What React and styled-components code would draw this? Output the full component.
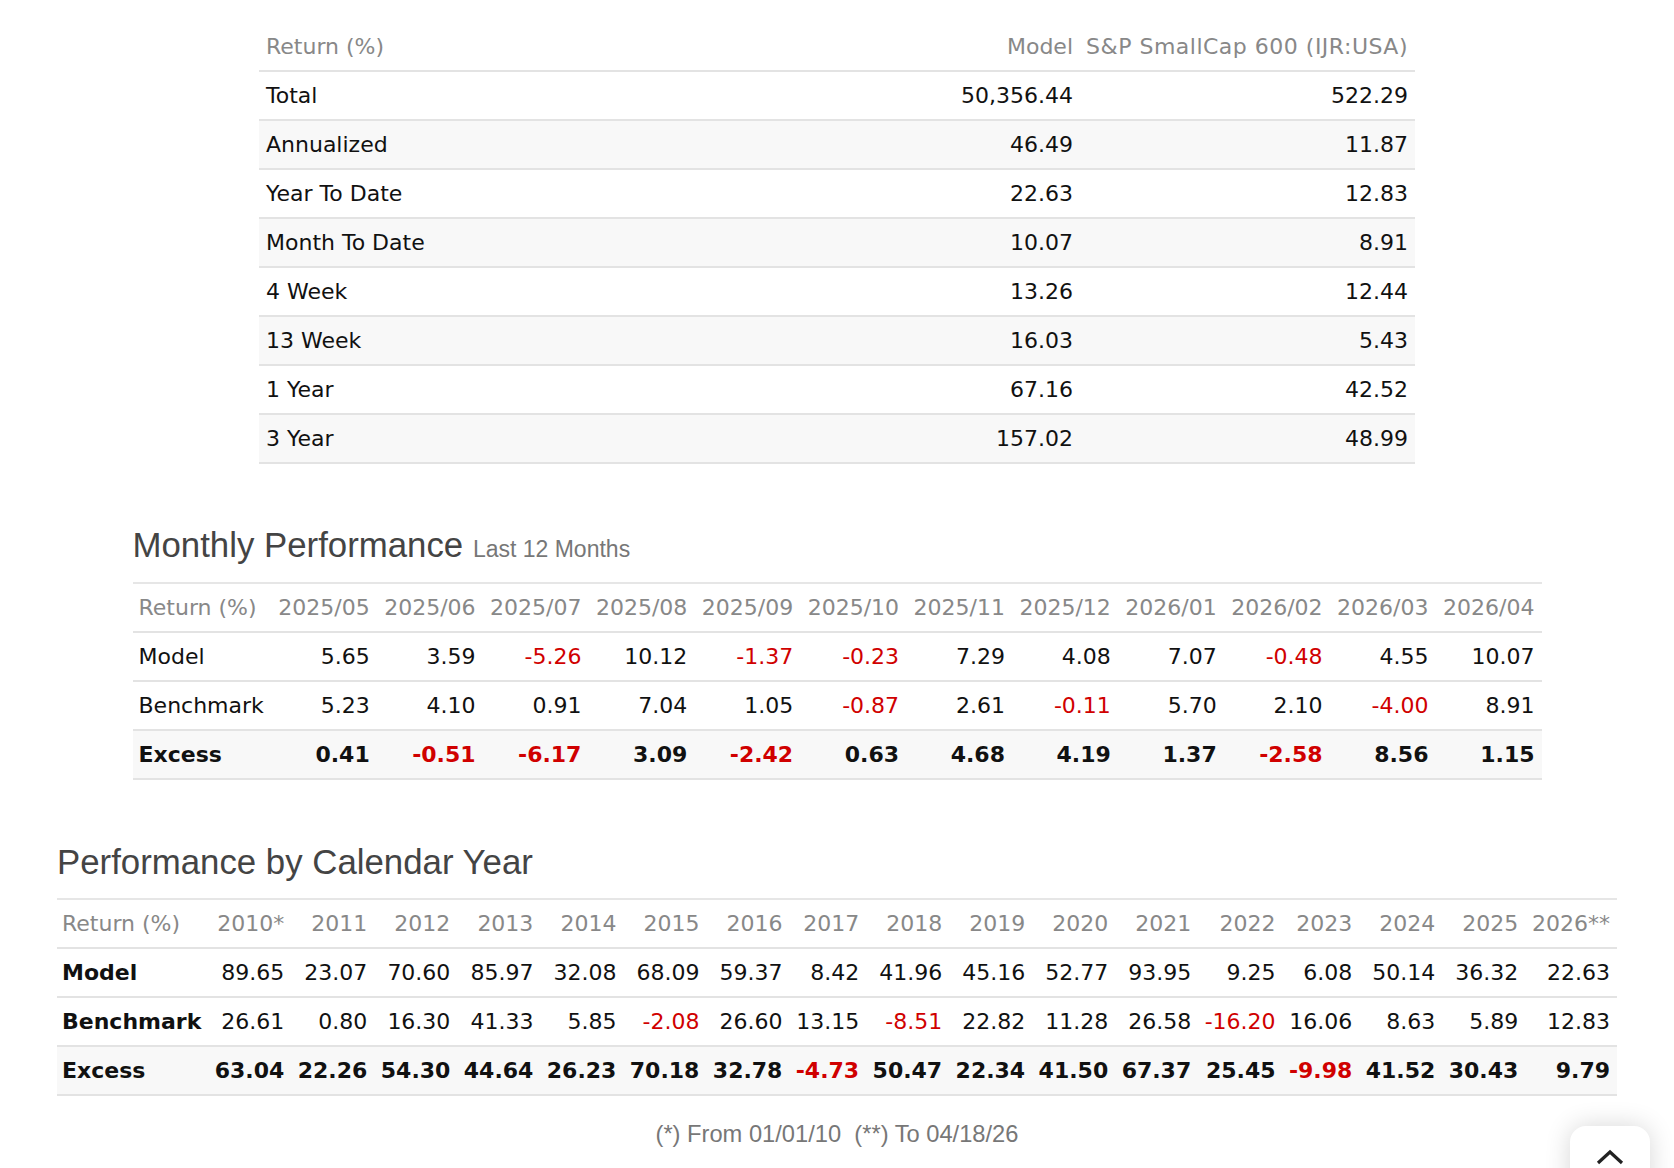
import React from "react";
import styled, { createGlobalStyle } from "styled-components";

const GlobalStyle = createGlobalStyle`
  * { box-sizing: border-box; }
  body {
    margin: 0;
    background: #fff;
    font-family: "DejaVu Sans", Verdana, sans-serif;
    color: #111;
  }
`;

const Page = styled.div`
  display: flex;
  flex-direction: column;
  align-items: center;
  padding: 23px 0 40px;
`;

const Section = styled.section`
  width: ${(p) => p.$width}px;
  margin-top: ${(p) => p.$top}px;
`;

const Heading = styled.h2`
  margin: 0 0 ${(p) => p.$gap || 16}px;
  font-family: "Liberation Sans", Helvetica, Arial, sans-serif;
  font-weight: 400;
  font-size: 34.8px;
  line-height: 40px;
  color: #444;
`;

const SubTitle = styled.span`
  font-size: 23px;
  line-height: 1;
  color: #777;
`;

const Table = styled.table`
  width: ${(p) => (p.$width ? `${p.$width}px` : "100%")};
  border-collapse: separate;
  border-spacing: 0;
  border-top: ${(p) => (p.$ruled ? "2px solid #e6e6e6" : "none")};
  font-size: 22px;
  line-height: 25px;
`;

const HeadCell = styled.th`
  padding: 11px 6px;
  width: ${(p) => (p.$w ? `${p.$w}px` : "auto")};
  text-align: ${(p) => p.$align || "right"};
  font-weight: 400;
  letter-spacing: ${(p) => p.$spacing || 0}px;
  color: #888;
  white-space: nowrap;
  border-bottom: 2px solid #e3e3e3;

  &:first-child { padding-left: ${(p) => p.$inset || 7}px; }
  &:last-child { padding-right: 7px; }
`;

const Row = styled.tr`
  background: ${(p) => (p.$shade ? "#f8f8f8" : "#fff")};
`;

const Cell = styled.td`
  padding: 11px 6px;
  text-align: ${(p) => p.$align || "right"};
  font-weight: ${(p) => (p.$bold ? 700 : 400)};
  color: ${(p) => (p.$neg ? "#d00000" : "#111")};
  white-space: nowrap;
  border-bottom: 2px solid #e3e3e3;

  &:first-child { padding-left: ${(p) => p.$inset || 7}px; }
  &:last-child { padding-right: 7px; }
`;

const Footnote = styled.p`
  margin: 25px 0 0;
  font-family: "Liberation Sans", Helvetica, Arial, sans-serif;
  font-size: 23.7px;
  line-height: 26px;
  color: #777;
  white-space: pre;
`;

const TopButton = styled.button`
  position: fixed;
  right: 24px;
  bottom: -40px;
  width: 80px;
  height: 82px;
  display: flex;
  justify-content: center;
  align-items: flex-start;
  padding-top: 22px;
  border: none;
  border-radius: 16px;
  background: #fff;
  box-shadow: 0 0 26px rgba(0, 0, 0, 0.16);
  cursor: pointer;
`;

const summary = [
  ["Total", "50,356.44", "522.29"],
  ["Annualized", "46.49", "11.87"],
  ["Year To Date", "22.63", "12.83"],
  ["Month To Date", "10.07", "8.91"],
  ["4 Week", "13.26", "12.44"],
  ["13 Week", "16.03", "5.43"],
  ["1 Year", "67.16", "42.52"],
  ["3 Year", "157.02", "48.99"],
];

const months = [
  "2025/05", "2025/06", "2025/07", "2025/08", "2025/09", "2025/10",
  "2025/11", "2025/12", "2026/01", "2026/02", "2026/03", "2026/04",
];

const monthly = [
  { label: "Model", values: ["5.65", "3.59", "-5.26", "10.12", "-1.37", "-0.23", "7.29", "4.08", "7.07", "-0.48", "4.55", "10.07"] },
  { label: "Benchmark", values: ["5.23", "4.10", "0.91", "7.04", "1.05", "-0.87", "2.61", "-0.11", "5.70", "2.10", "-4.00", "8.91"] },
  { label: "Excess", bold: true, values: ["0.41", "-0.51", "-6.17", "3.09", "-2.42", "0.63", "4.68", "4.19", "1.37", "-2.58", "8.56", "1.15"] },
];

const years = [
  "2010*", "2011", "2012", "2013", "2014", "2015", "2016", "2017", "2018",
  "2019", "2020", "2021", "2022", "2023", "2024", "2025", "2026**",
];

const yearly = [
  { label: "Model", values: ["89.65", "23.07", "70.60", "85.97", "32.08", "68.09", "59.37", "8.42", "41.96", "45.16", "52.77", "93.95", "9.25", "6.08", "50.14", "36.32", "22.63"] },
  { label: "Benchmark", values: ["26.61", "0.80", "16.30", "41.33", "5.85", "-2.08", "26.60", "13.15", "-8.51", "22.82", "11.28", "26.58", "-16.20", "16.06", "8.63", "5.89", "12.83"] },
  { label: "Excess", bold: true, values: ["63.04", "22.26", "54.30", "44.64", "26.23", "70.18", "32.78", "-4.73", "50.47", "22.34", "41.50", "67.37", "25.45", "-9.98", "41.52", "30.43", "9.79"] },
];

function PerfTable({ columns, rows, boldLabels, inset }) {
  return (
    <Table $ruled>
      <thead>
        <tr>
          <HeadCell $align="left" $w={1} $inset={inset}>
            Return (%)
          </HeadCell>
          {columns.map((c) => (
            <HeadCell key={c}>{c}</HeadCell>
          ))}
        </tr>
      </thead>
      <tbody>
        {rows.map((r) => (
          <Row key={r.label} $shade={r.bold}>
            <Cell $align="left" $inset={inset} $bold={r.bold || boldLabels}>
              {r.label}
            </Cell>
            {r.values.map((v, i) => (
              <Cell key={i} $bold={r.bold} $neg={v.startsWith("-")}>
                {v}
              </Cell>
            ))}
          </Row>
        ))}
      </tbody>
    </Table>
  );
}

function App() {
  return (
    <Page>
      <GlobalStyle />
      <Table $width={1156}>
        <thead>
          <tr>
            <HeadCell $align="left">Return (%)</HeadCell>
            <HeadCell $w={126}>Model</HeadCell>
            <HeadCell $w={336} $spacing={0.5}>
              S&amp;P SmallCap 600 (IJR:USA)
            </HeadCell>
          </tr>
        </thead>
        <tbody>
          {summary.map(([label, model, bench], i) => (
            <Row key={label} $shade={i % 2 === 1}>
              <Cell $align="left">{label}</Cell>
              <Cell>{model}</Cell>
              <Cell>{bench}</Cell>
            </Row>
          ))}
        </tbody>
      </Table>

      <Section $width={1409} $top={61}>
        <Heading $gap={17}>
          Monthly Performance <SubTitle>Last 12 Months</SubTitle>
        </Heading>
        <PerfTable columns={months} rows={monthly} inset={6} />
      </Section>

      <Section $width={1560} $top={62}>
        <Heading>Performance by Calendar Year</Heading>
        <PerfTable columns={years} rows={yearly} boldLabels inset={5} />
      </Section>

      <Footnote>{"(*) From 01/01/10  (**) To 04/18/26"}</Footnote>

      <TopButton aria-label="Back to top">
        <svg width="30" height="18" viewBox="0 0 30 18">
          <polyline
            points="3,15 15,4 27,15"
            fill="none"
            stroke="#222"
            strokeWidth="3.2"
          />
        </svg>
      </TopButton>
    </Page>
  );
}

export default App;
